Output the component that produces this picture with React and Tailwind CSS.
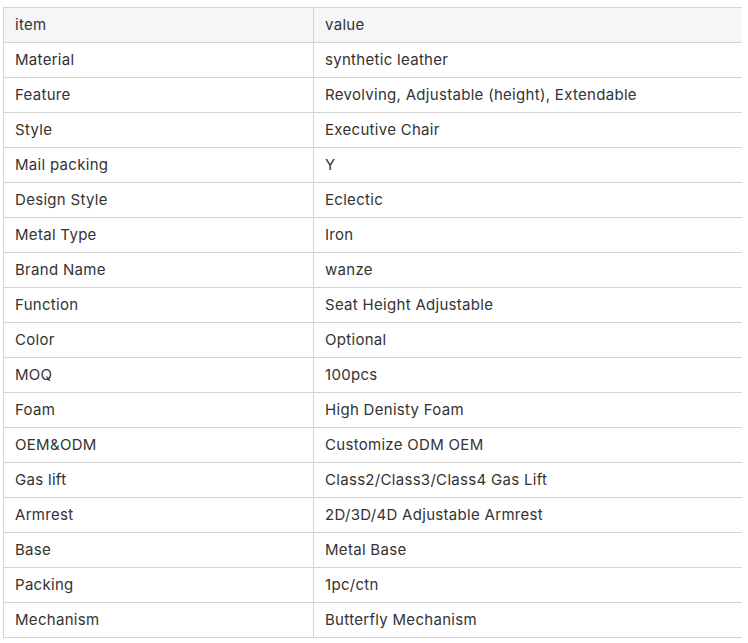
const rows = [
  ["Material", "synthetic leather"],
  ["Feature", "Revolving, Adjustable (height), Extendable"],
  ["Style", "Executive Chair"],
  ["Mail packing", "Y"],
  ["Design Style", "Eclectic"],
  ["Metal Type", "Iron"],
  ["Brand Name", "wanze"],
  ["Function", "Seat Height Adjustable"],
  ["Color", "Optional"],
  ["MOQ", "100pcs"],
  ["Foam", "High Denisty Foam"],
  ["OEM&ODM", "Customize ODM OEM"],
  ["Gas lift", "Class2/Class3/Class4 Gas Lift"],
  ["Armrest", "2D/3D/4D Adjustable Armrest"],
  ["Base", "Metal Base"],
  ["Packing", "1pc/ctn"],
  ["Mechanism", "Butterfly Mechanism"],
];

function Row({ a, b, header }) {
  return (
    <div className={`flex h-[35px] border-b border-[#d4d4d4] ${header ? "bg-[#f5f6f8]" : "bg-white"}`}>
      <div className="w-[309px] pl-[11px] flex items-center">{a}</div>
      <div className="flex-1 border-l border-[#d4d4d4] pl-[11px] flex items-center">{b}</div>
    </div>
  );
}

export default function App() {
  return (
    <div className="w-[748px] h-[643px] bg-white pl-[3px] pt-[7px]" style={{ fontFamily: "Inter, 'Noto Sans', sans-serif" }}>
      <div className="w-[739px] border-l border-t border-[#d4d4d4] text-[15px] tracking-[0.3px] leading-[20px] text-[#333333]">
        <Row a="item" b="value" header />
        {rows.map(([a, b]) => (
          <Row key={a} a={a} b={b} />
        ))}
      </div>
    </div>
  );
}
